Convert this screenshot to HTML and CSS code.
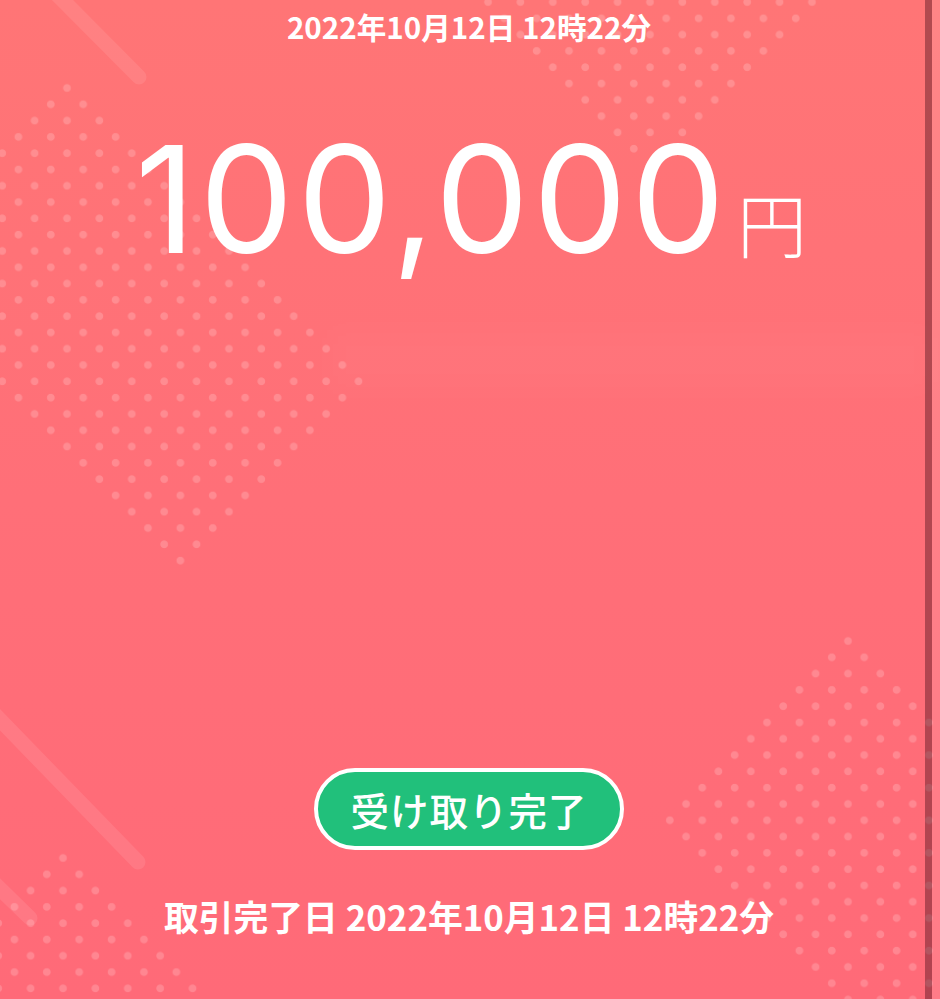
FILE: index.html
```html
<!DOCTYPE html>
<html lang="ja">
<head>
<meta charset="utf-8">
<title>受け取り完了</title>
<link rel="stylesheet" href="styles.css">
</head>
<body>
<div class="screen">
  <div class="decor">
    <div class="dots dots-tl"></div>
    <div class="dots dots-tr"></div>
    <div class="dots dots-br"></div>
    <div class="dots dots-bl"></div>
    <div class="glow"></div>
    <svg class="lines" width="940" height="999" viewBox="0 0 940 999">
      <line x1="-15" y1="-78" x2="139" y2="77"/>
      <line x1="-60" y1="658" x2="138" y2="862"/>
      <line x1="-60" y1="830" x2="30" y2="918"/>
    </svg>
  </div>
  <main class="content">
    <div class="date-top">2022年10月12日 12時22分</div>
    <div class="amount"><span class="amount-num">100,000</span><span class="amount-unit">円</span></div>
    <div class="spacer"></div>
    <div class="status-btn">受け取り完了</div>
    <div class="done-date">取引完了日 2022年10月12日 12時22分</div>
  </main>
  <div class="edge"></div>
</div>
</body>
</html>
```

FILE: styles.css
```css
html, body {
  margin: 0;
  padding: 0;
}
body {
  width: 940px;
  height: 999px;
  overflow: hidden;
  font-family: "Noto Sans CJK JP", "Noto Sans", sans-serif;
  color: #ffffff;
}
.screen {
  position: relative;
  width: 940px;
  height: 999px;
  overflow: hidden;
  background: linear-gradient(180deg, #ff7576 0%, #ff6f78 50%, #ff6a78 100%);
}
.decor {
  position: absolute;
  inset: 0;
  pointer-events: none;
}
.dots {
  position: absolute;
  inset: 0;
  background-image:
    radial-gradient(circle at 8.1px 8.15px, rgba(255,255,255,0.19) 3.4px, rgba(255,255,255,0) 4.3px),
    radial-gradient(circle at 24.3px 24.45px, rgba(255,255,255,0.19) 3.4px, rgba(255,255,255,0) 4.3px);
  background-size: 32.4px 32.6px;
}
.dots-tl {
  background-position: 58.9px 79.85px;
  clip-path: polygon(67px 78px, 370px 381px, 180px 571px, -124px 267px);
}
.dots-tr {
  background-position: 641.9px 156.85px;
  clip-path: polygon(650px 176px, 470px -4px, 830px -4px);
}
.dots-br {
  background-position: 839.9px 632.85px;
  clip-path: polygon(848px 630px, 1100px 882px, 1100px 1010px, 850px 1010px, 660px 820px);
}
.dots-bl {
  background-position: 54.9px 849.85px;
  clip-path: polygon(63px 847px, 226px 1010px, -100px 1010px);
}
.glow {
  position: absolute;
  left: 330px;
  top: 330px;
  width: 600px;
  height: 60px;
  background: rgba(255,255,255,0.025);
  filter: blur(12px);
}
.lines {
  position: absolute;
  left: 0;
  top: 0;
}
.lines line {
  stroke: rgba(255,255,255,0.09);
  stroke-width: 15;
  stroke-linecap: round;
}
.content {
  position: relative;
  height: 999px;
  display: flex;
  flex-direction: column;
  align-items: center;
  box-sizing: border-box;
  padding: 8px 0 61px;
  margin-right: 2px;
}
.date-top {
  font-size: 29.6px;
  line-height: 38px;
  font-weight: 700;
  white-space: nowrap;
}
.amount {
  margin-top: 79px;
  display: flex;
  align-items: baseline;
  white-space: nowrap;
  margin-left: 4px;
}
.amount-num {
  font-family: "Inter", "Noto Sans", sans-serif;
  font-weight: 400;
  font-size: 149px;
  line-height: 149px;
  letter-spacing: 4px;
}
.amount-unit {
  font-family: "Noto Sans CJK JP", sans-serif;
  font-weight: 300;
  font-size: 70px;
  margin-left: 8px;
}
.spacer {
  flex: 1;
}
.status-btn {
  box-sizing: border-box;
  width: 310px;
  height: 82px;
  border: 4px solid #ffffff;
  border-radius: 41px;
  background: #21c07b;
  display: flex;
  align-items: center;
  justify-content: center;
  font-size: 38.5px;
  font-weight: 500;
  letter-spacing: 1px;
  white-space: nowrap;
}
.done-date {
  margin-top: 44px;
  font-size: 34.8px;
  line-height: 44px;
  font-weight: 700;
  white-space: nowrap;
}
.edge {
  position: absolute;
  top: 0;
  right: 0;
  width: 15px;
  height: 999px;
  display: flex;
}
.edge::before {
  content: "";
  width: 7px;
  background: rgba(40,0,10,0.36);
}
.edge::after {
  content: "";
  flex: 1;
  background: rgba(255,255,255,0.12);
}
```
